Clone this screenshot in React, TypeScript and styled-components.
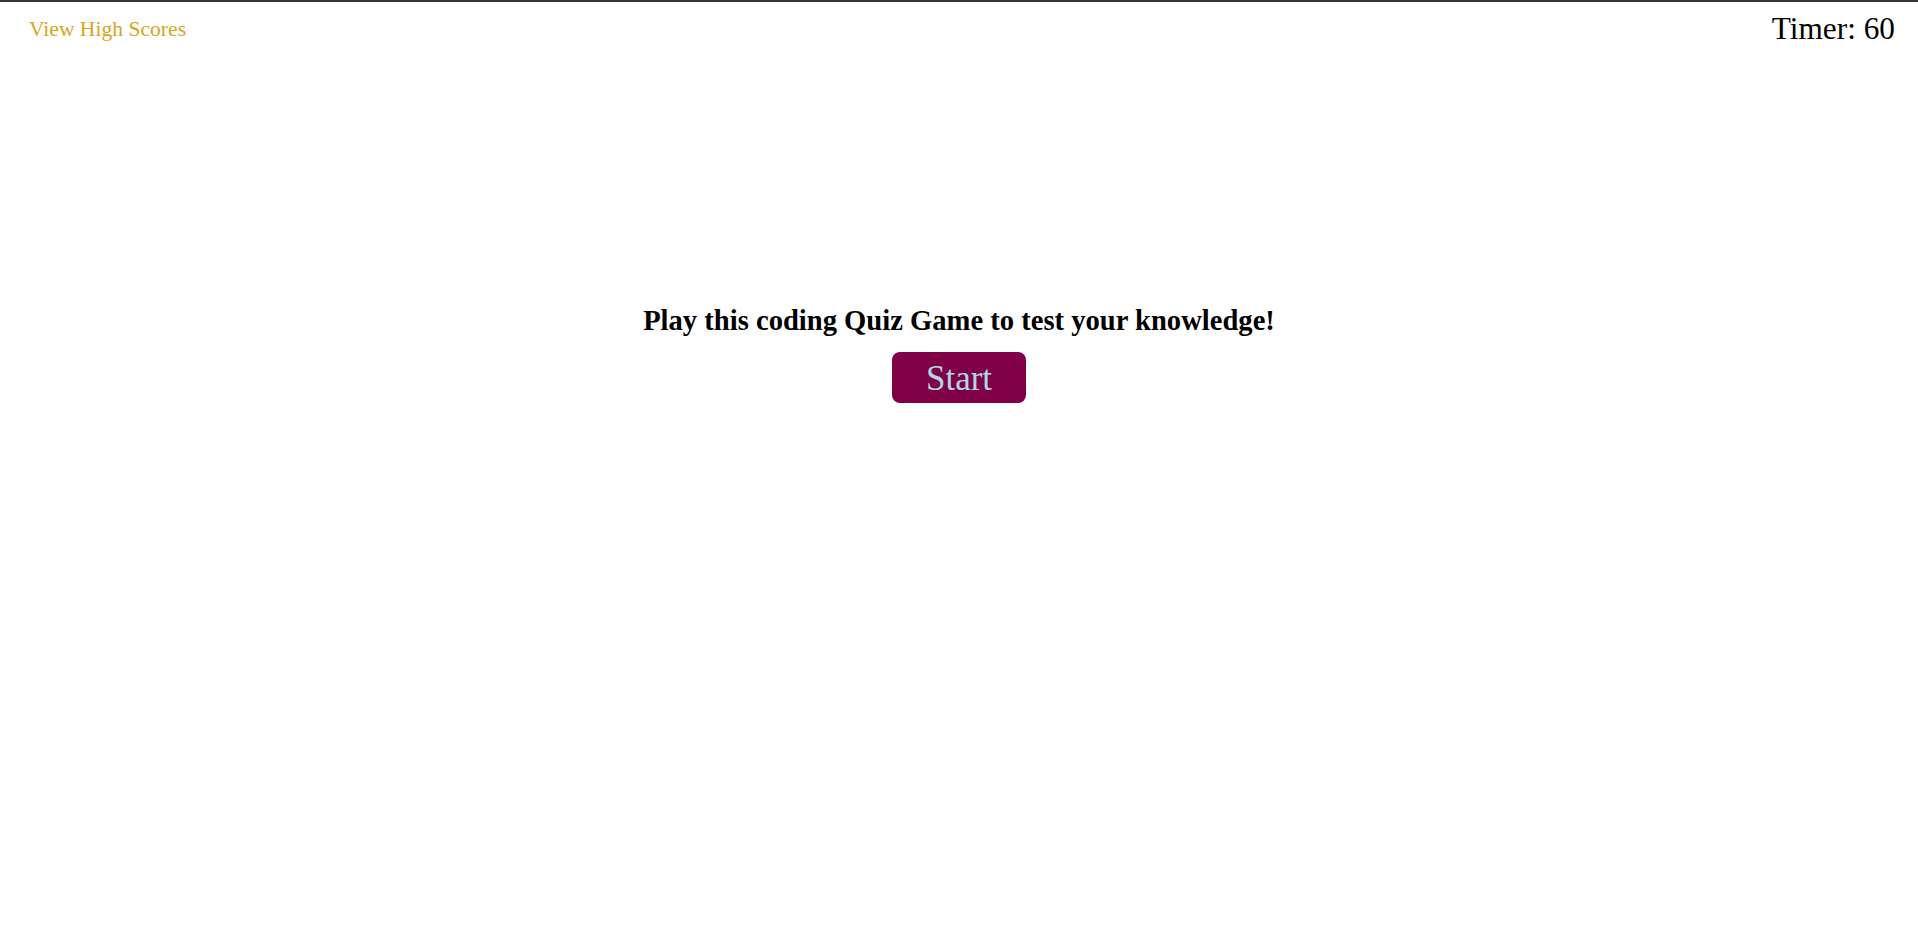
import React from "react";
import styled, { createGlobalStyle } from "styled-components";

const Global = createGlobalStyle`
  html, body { margin: 0; padding: 0; background: #ffffff; }
  body { font-family: "Liberation Serif", "Times New Roman", serif; color: #000; }
`;

const Page = styled.div`
  min-height: 950px;
  box-sizing: border-box;
  border-top: 2px solid #363636;
  display: flex;
  flex-direction: column;
`;

const Header = styled.header`
  display: flex;
  justify-content: space-between;
  align-items: flex-start;
  padding: 9px 23px 0 29px;
`;

const ScoresLink = styled.a`
  font-family: "Liberation Serif", serif;
  font-size: 21.6px;
  color: #daa520;
  text-decoration: none;
  line-height: 26px;
  margin-top: 5px;
  cursor: pointer;
`;

const Timer = styled.div`
  font-family: "Liberation Serif", serif;
  font-size: 31.3px;
  line-height: 36px;
`;

const Intro = styled.main`
  display: flex;
  flex-direction: column;
  align-items: center;
  gap: 15px;
  margin-top: 257px;
`;

const Heading = styled.h1`
  margin: 0;
  font-family: "Liberation Serif", serif;
  font-size: 28.6px;
  font-weight: bold;
  line-height: 33px;
`;

const StartButton = styled.button`
  font-family: "Liberation Serif", serif;
  font-size: 35px;
  line-height: 40px;
  color: #add8e6;
  background: #800047;
  border: none;
  border-radius: 8px;
  padding: 7px 34px 4px;
  cursor: pointer;
`;

export default function App() {
  return (
    <>
      <Global />
      <Page>
        <Header>
          <ScoresLink>View High Scores</ScoresLink>
          <Timer>Timer: 60</Timer>
        </Header>
        <Intro>
          <Heading>Play this coding Quiz Game to test your knowledge!</Heading>
          <StartButton>Start</StartButton>
        </Intro>
      </Page>
    </>
  );
}
